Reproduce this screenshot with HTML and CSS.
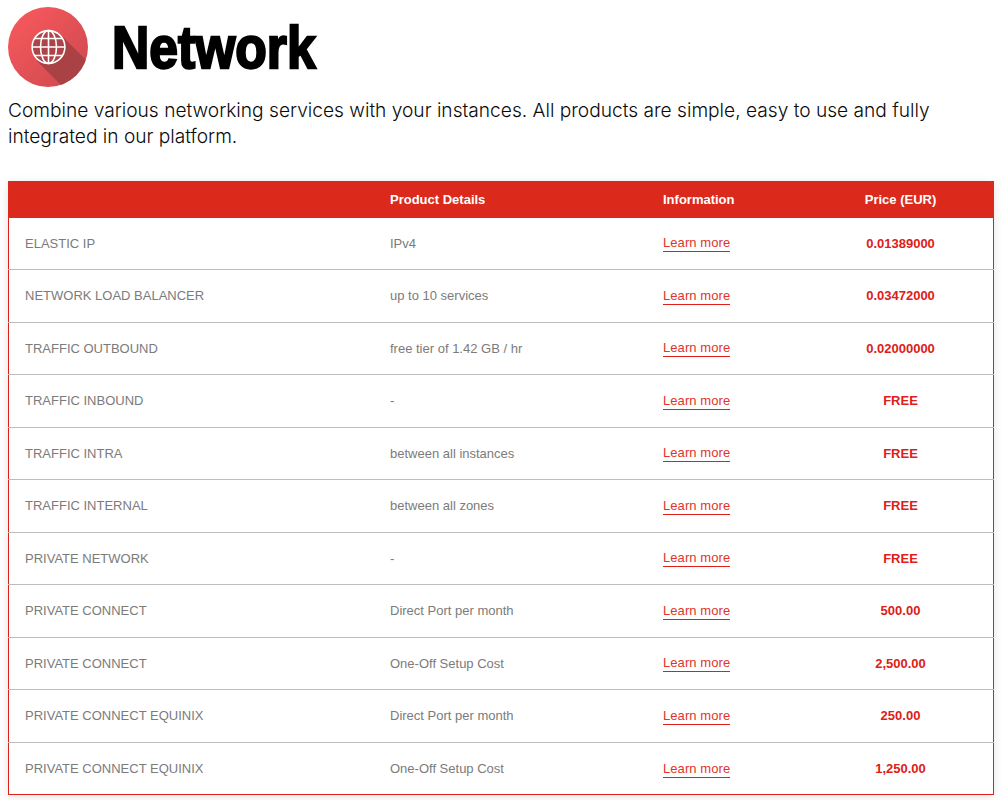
FILE: index.html
```html
<!DOCTYPE html>
<html lang="en">
<head>
<meta charset="utf-8">
<title>Network</title>
<link rel="stylesheet" href="styles.css">
</head>
<body>
<header class="title-row">
  <svg class="logo" width="80" height="80" viewBox="0 0 80 80" aria-hidden="true">
    <defs>
      <linearGradient id="bg" x1="0" y1="0" x2="1" y2="1">
        <stop offset="0.1" stop-color="#f6585c"/>
        <stop offset="0.9" stop-color="#cf4a50"/>
      </linearGradient>
      <clipPath id="disc"><circle cx="40" cy="40" r="40"/></clipPath>
    </defs>
    <circle cx="40" cy="40" r="40" fill="url(#bg)"/>
    <path clip-path="url(#disc)" d="M54 29 L92 67 L67 92 L29 54 Z" fill="#a94145"/>
    <g fill="none" stroke="#fff" stroke-width="1.6">
      <circle cx="40.5" cy="40" r="16.4" fill="#ad4449"/>
      <ellipse cx="40.5" cy="40" rx="8" ry="16.4"/>
      <path d="M40.5 23.6V56.4M24.1 40H56.9M26.5 31.5H54.5M26.5 48.5H54.5"/>
    </g>
  </svg>
  <h1 class="title">Network</h1>
</header>
<p class="intro">Combine various networking services with your instances. All products are simple, easy to use and fully integrated in our platform.</p>
<div class="card">
<table class="prices">
  <colgroup><col class="c1"><col class="c2"><col class="c3"><col class="c4"></colgroup>
  <thead>
    <tr><th></th><th>Product Details</th><th>Information</th><th class="center">Price (EUR)</th></tr>
  </thead>
  <tbody>
    <tr><td>ELASTIC IP</td><td>IPv4</td><td><a href="#">Learn more</a></td><td class="price">0.01389000</td></tr>
    <tr><td>NETWORK LOAD BALANCER</td><td>up to 10 services</td><td><a href="#">Learn more</a></td><td class="price">0.03472000</td></tr>
    <tr><td>TRAFFIC OUTBOUND</td><td>free tier of 1.42 GB / hr</td><td><a href="#">Learn more</a></td><td class="price">0.02000000</td></tr>
    <tr><td>TRAFFIC INBOUND</td><td>-</td><td><a href="#">Learn more</a></td><td class="price">FREE</td></tr>
    <tr><td>TRAFFIC INTRA</td><td>between all instances</td><td><a href="#">Learn more</a></td><td class="price">FREE</td></tr>
    <tr><td>TRAFFIC INTERNAL</td><td>between all zones</td><td><a href="#">Learn more</a></td><td class="price">FREE</td></tr>
    <tr><td>PRIVATE NETWORK</td><td>-</td><td><a href="#">Learn more</a></td><td class="price">FREE</td></tr>
    <tr><td>PRIVATE CONNECT</td><td>Direct Port per month</td><td><a href="#">Learn more</a></td><td class="price">500.00</td></tr>
    <tr><td>PRIVATE CONNECT</td><td>One-Off Setup Cost</td><td><a href="#">Learn more</a></td><td class="price">2,500.00</td></tr>
    <tr><td>PRIVATE CONNECT EQUINIX</td><td>Direct Port per month</td><td><a href="#">Learn more</a></td><td class="price">250.00</td></tr>
    <tr><td>PRIVATE CONNECT EQUINIX</td><td>One-Off Setup Cost</td><td><a href="#">Learn more</a></td><td class="price">1,250.00</td></tr>
  </tbody>
</table>
</div>
</body>
</html>
```
FILE: styles.css
```css
* { box-sizing: border-box; }
html, body { background: #fff; }
body {
  margin: 0;
  padding: 7px 9px 0 8px;
  font-family: "Liberation Sans", Arial, sans-serif;
  color: #000;
  overflow: hidden;
  height: 800px;
}
.title-row { display: flex; align-items: center; gap: 24px; height: 80px; }
.logo { display: block; flex: none; }
.title {
  margin: 0;
  padding-top: 2px;
  font-family: "Liberation Sans", sans-serif;
  font-size: 60px;
  font-weight: 700;
  line-height: 80px;
  -webkit-text-stroke: 2.4px #000;
  transform: scaleX(0.86);
  transform-origin: left center;
}
.intro {
  margin: 10px 0 32px;
  font-family: Inter, "Liberation Sans", sans-serif;
  font-size: 19.15px;
  line-height: 26px;
  font-weight: 300;
  color: #0a0a0a;
  height: 52px;
}
.card {
  border: 1px solid #e02018;
  border-top: 0;
  height: 614px;
  box-shadow: 0 2px 10px rgba(0, 0, 0, 0.1);
}
.prices {
  width: 986px;
  margin-left: -1px;
  border-collapse: separate;
  border-spacing: 0;
  table-layout: fixed;
  font-size: 13px;
}
.c1 { width: 366px; }
.c2 { width: 273px; }
.c3 { width: 160px; }
.c4 { width: 187px; }
.prices th {
  height: 36.5px;
  padding: 0 0 0 16px;
  background: #db291c;
  color: #fff;
  font-weight: 700;
  font-size: 13px;
  text-align: left;
}
.prices th.center { text-align: center; padding-left: 0; }
.prices td {
  height: 52.5px;
  padding: 0 16px;
  color: #7b7b7b;
  border-bottom: 1px solid #bdbdbd;
}
.prices tr td:first-child { padding-left: 17px; }
.prices tbody tr:last-child td { border-bottom: 0; }
.prices a {
  color: #e0352b;
  text-decoration: none;
  border-bottom: 1px solid #e02018;
  display: inline-block;
  line-height: 15px;
  padding-bottom: 1px;
  letter-spacing: 0.08px;
  vertical-align: -1.3px;
}
.prices td.price {
  text-align: center;
  padding-left: 0;
  padding-right: 0;
  color: #dd2018;
  font-weight: 700;
}
```
